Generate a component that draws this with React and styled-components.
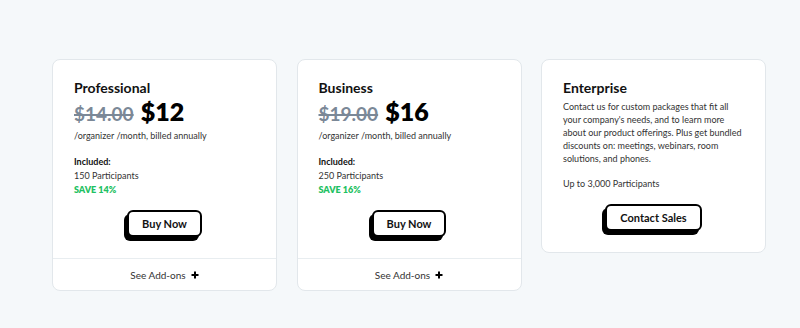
import styled, { createGlobalStyle } from "styled-components";

const GlobalStyle = createGlobalStyle`
  html, body {
    margin: 0;
    padding: 0;
    background: #f5f8fa;
    font-family: "Lato", "Liberation Sans", sans-serif;
    color: #222;
  }
`;

const plans = [
  {
    name: "Professional",
    oldPrice: "$14.00",
    price: "$12",
    participants: "150 Participants",
    save: "SAVE 14%",
  },
  {
    name: "Business",
    oldPrice: "$19.00",
    price: "$16",
    participants: "250 Participants",
    save: "SAVE 16%",
  },
];

export default function App() {
  return (
    <Page>
      <GlobalStyle />
      {plans.map((plan) => (
        <Card key={plan.name}>
          <Body>
            <Title>{plan.name}</Title>
            <PriceRow>
              <OldPrice>{plan.oldPrice}</OldPrice>
              <Price>{plan.price}</Price>
            </PriceRow>
            <Billing>/organizer /month, billed annually</Billing>
            <Included>
              <strong>Included:</strong>
              <span>{plan.participants}</span>
              <Save>{plan.save}</Save>
            </Included>
            <Button>Buy Now</Button>
          </Body>
          <Footer>
            See Add-ons
            <svg width="8" height="8" viewBox="0 0 8 8">
              <path d="M4 0.5v7M0.5 4h7" stroke="#000" strokeWidth="2" />
            </svg>
          </Footer>
        </Card>
      ))}
      <Card>
        <Body $bottom={21}>
          <Title>Enterprise</Title>
          <Text>
            Contact us for custom packages that fit all your company's needs,
            and to learn more about our product offerings. Plus get bundled
            discounts on: meetings, webinars, room solutions, and phones.
          </Text>
          <Text $top={12}>Up to 3,000 Participants</Text>
          <Button $top={14}>Contact Sales</Button>
        </Body>
      </Card>
    </Page>
  );
}

const Page = styled.div`
  display: flex;
  align-items: flex-start;
  gap: 19.5px;
  padding: 59px 0 0 52px;
  height: 328px;
  box-sizing: border-box;
`;

const Card = styled.div`
  width: 225px;
  box-sizing: border-box;
  background: #fff;
  border: 1px solid #e2e7eb;
  border-radius: 8px;
  display: flex;
  flex-direction: column;
`;

const Body = styled.div`
  display: flex;
  flex-direction: column;
  align-items: flex-start;
  padding: 19px 21px ${(p) => p.$bottom ?? 21}px;
`;

const Title = styled.h3`
  margin: 0;
  font-size: 14px;
  line-height: 17px;
  font-weight: 700;
  color: #111;
`;

const PriceRow = styled.div`
  display: flex;
  align-items: baseline;
  gap: 7px;
  height: 29px;
`;

const OldPrice = styled.span`
  font-size: 19px;
  font-weight: 700;
  color: #7b8897;
  text-decoration: line-through;
  text-decoration-thickness: 2px;
`;

const Price = styled.span`
  font-size: 25px;
  line-height: 30px;
  font-weight: 800;
  color: #000;
`;

const Billing = styled.div`
  margin-top: 5px;
  font-size: 9px;
  line-height: 12px;
  color: #333;
`;

const Included = styled.div`
  margin-top: 13px;
  display: flex;
  flex-direction: column;
  font-size: 9px;
  line-height: 14px;
  color: #333;

  strong {
    color: #111;
  }
`;

const Save = styled.span`
  color: #1fc163;
  font-weight: 800;
`;

const Text = styled.p`
  margin: ${(p) => p.$top ?? 4}px 0 0;
  font-size: 9px;
  line-height: 13px;
  color: #333;
`;

const Button = styled.button`
  align-self: center;
  margin-top: ${(p) => p.$top ?? 13}px;
  height: 27px;
  padding: 0 13px;
  border: 2px solid #000;
  border-radius: 6px;
  background: #fff;
  box-shadow: -3px 4px 0 #000;
  font-family: inherit;
  font-size: 11px;
  font-weight: 700;
  color: #111;
  cursor: pointer;
`;

const Footer = styled.div`
  border-top: 1px solid #e8edf0;
  height: 31px;
  display: flex;
  align-items: center;
  justify-content: center;
  gap: 5px;
  font-size: 10px;
  color: #333;
`;
